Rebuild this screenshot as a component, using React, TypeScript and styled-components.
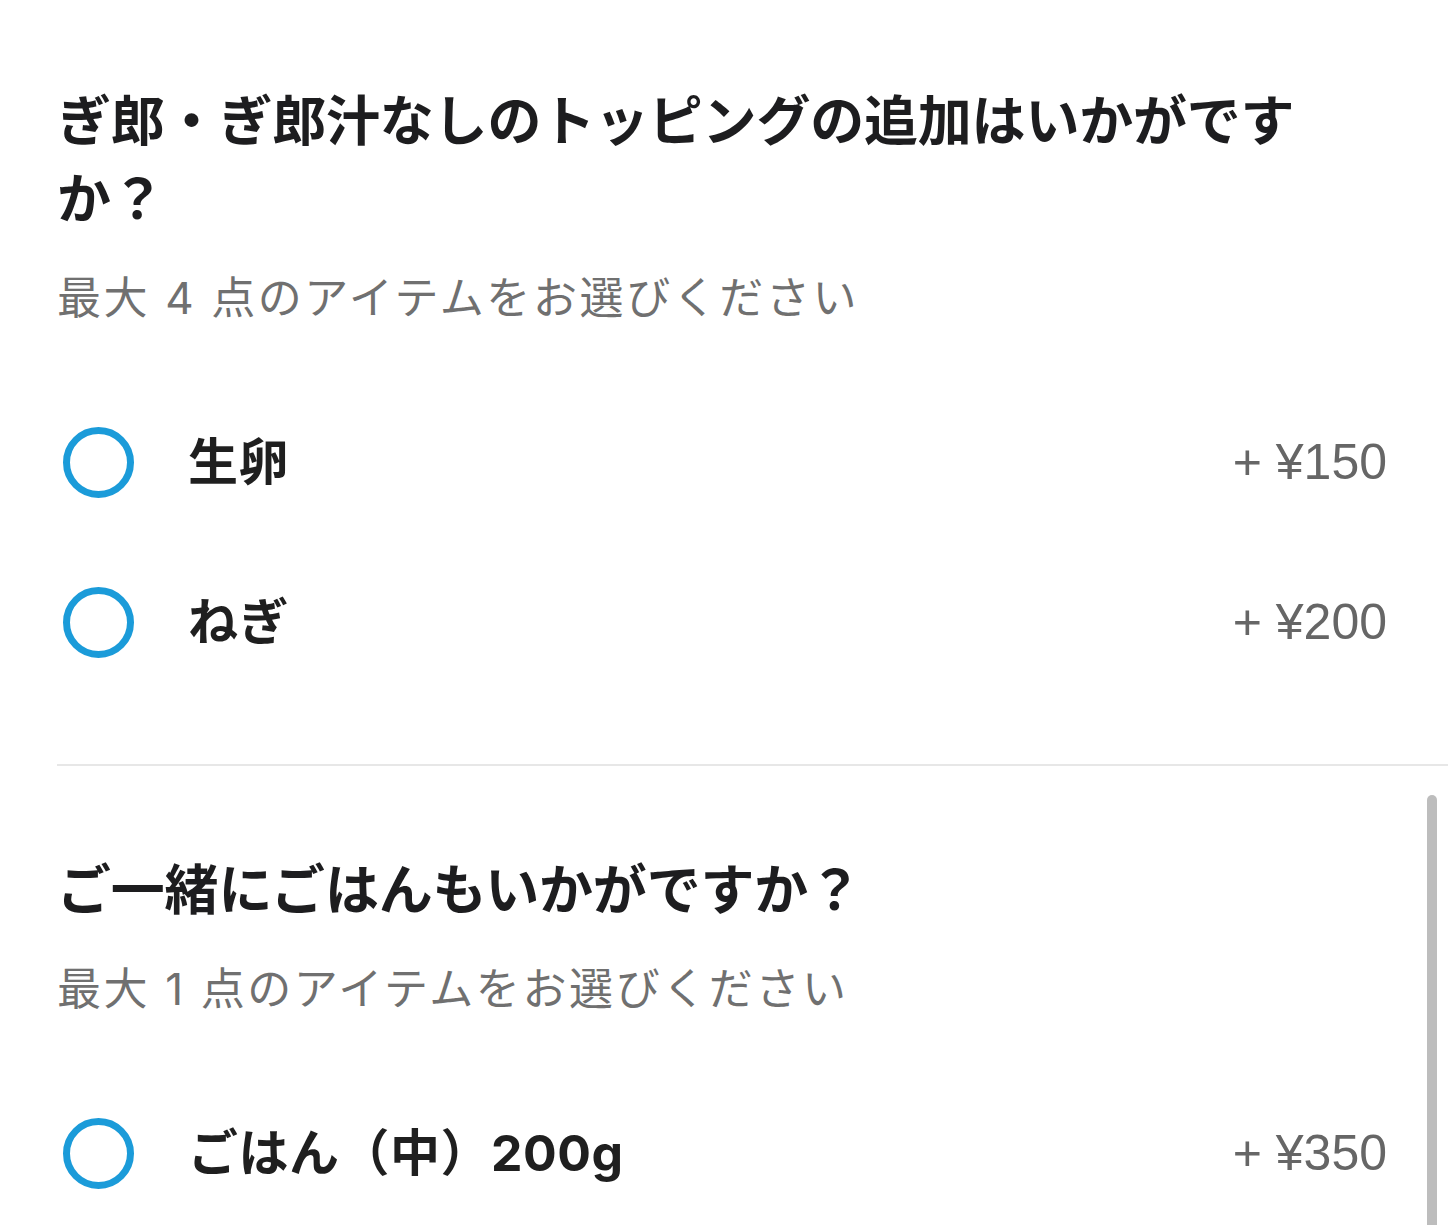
import React from "react";
import styled, { createGlobalStyle } from "styled-components";

const GlobalStyle = createGlobalStyle`
  html, body {
    margin: 0;
    padding: 0;
    background: #ffffff;
  }
  body {
    font-family: "Inter", "Noto Sans CJK JP", sans-serif;
    -webkit-font-smoothing: antialiased;
  }
  * { box-sizing: border-box; }
`;

const Page = styled.div`
  position: relative;
  height: 1225px;
  overflow: hidden;
  background: #ffffff;
  padding-left: 57px;
`;

const Section = styled.section<{ $top: number; $divider?: boolean }>`
  padding-top: ${(p) => p.$top}px;
  padding-bottom: 62px;
  border-bottom: ${(p) => (p.$divider ? "2px solid #e7e7e7" : "none")};
`;

const Title = styled.h2`
  margin: 0;
  max-width: 1262px;
  font-size: 54px;
  line-height: 78px;
  font-weight: 700;
  color: #1d1d1f;
  letter-spacing: -0.2px;
`;

const Subtitle = styled.p`
  margin: 29px 0 0;
  font-size: 44px;
  line-height: 60px;
  font-weight: 400;
  color: #707070;
  letter-spacing: 2.6px;
`;

const List = styled.div`
  margin-top: 54px;
  display: flex;
  flex-direction: column;
`;

const Row = styled.div`
  display: flex;
  align-items: center;
  height: 160px;
  padding-right: 61px;
`;

const Radio = styled.span`
  flex-shrink: 0;
  width: 71px;
  height: 71px;
  margin-left: 6px;
  border: 7px solid #1b9bd9;
  border-radius: 50%;
  background: #ffffff;
`;

const Label = styled.span`
  flex: 1;
  margin-left: 54px;
  font-size: 50px;
  line-height: 60px;
  font-weight: 700;
  color: #1f1f1f;
  letter-spacing: 0.5px;
`;

const Price = styled.span`
  font-family: "Liberation Sans", "Noto Sans CJK JP", sans-serif;
  font-size: 50px;
  line-height: 60px;
  color: #666666;
  white-space: nowrap;
`;

const ScrollThumb = styled.div`
  position: absolute;
  right: 11px;
  top: 795px;
  width: 10px;
  height: 470px;
  border-radius: 5px;
  background: #bdbdbd;
`;

type Item = { label: string; price: string };

const sections: {
  title: string;
  note: string;
  items: Item[];
}[] = [
  {
    title: "ぎ郎・ぎ郎汁なしのトッピングの追加はいかがですか？",
    note: "最大 4 点のアイテムをお選びください",
    items: [
      { label: "生卵", price: "+ ¥150" },
      { label: "ねぎ", price: "+ ¥200" },
    ],
  },
  {
    title: "ご一緒にごはんもいかがですか？",
    note: "最大 1 点のアイテムをお選びください",
    items: [{ label: "ごはん（中）200g", price: "+ ¥350" }],
  },
];

export default function App() {
  return (
    <>
      <GlobalStyle />
      <Page>
        {sections.map((s, i) => (
          <Section key={s.title} $top={i === 0 ? 83 : 86} $divider={i === 0}>
            <Title>{s.title}</Title>
            <Subtitle>{s.note}</Subtitle>
            <List>
              {s.items.map((it) => (
                <Row key={it.label}>
                  <Radio role="radio" aria-checked="false" />
                  <Label>{it.label}</Label>
                  <Price>{it.price}</Price>
                </Row>
              ))}
            </List>
          </Section>
        ))}
        <ScrollThumb />
      </Page>
    </>
  );
}
